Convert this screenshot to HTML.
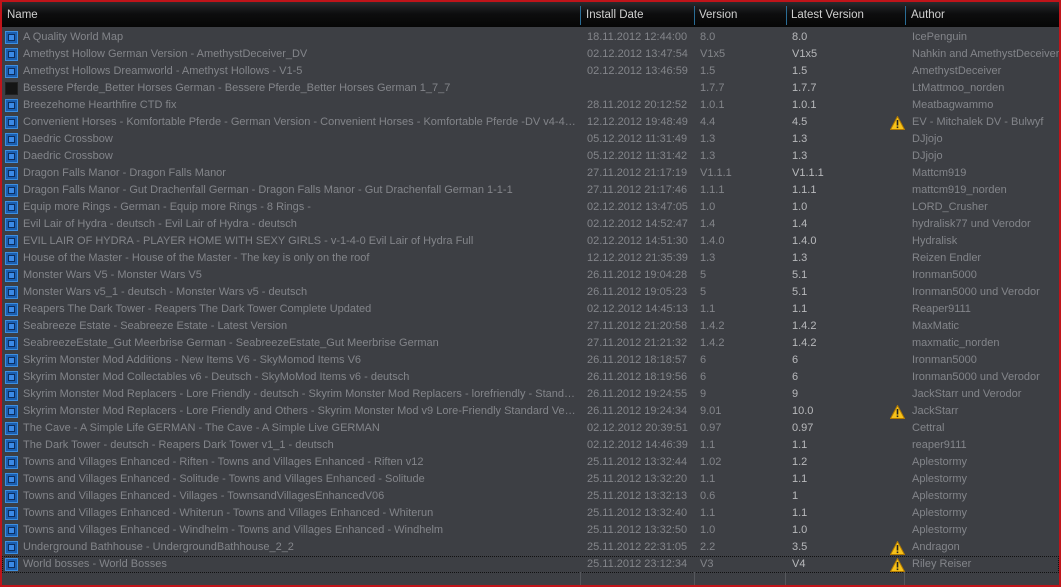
<!DOCTYPE html><html><head><style>
*{margin:0;padding:0;box-sizing:border-box}
body{width:1061px;height:587px;background:#c0141a;overflow:hidden;font-family:"Liberation Sans",sans-serif;font-size:11px}
#w{position:absolute;left:2px;top:2px;width:1057px;height:583px;background:#3d3f44;overflow:hidden}
#h{position:absolute;left:0;top:0;width:100%;height:25px;background:linear-gradient(#2a2b2e 0,#1a1b1d 6px,#0d0d0e 12px,#060606 25px);color:#d0d0d0;font-size:11.5px}
#h span{position:absolute;top:7px}
.sep{position:absolute;top:4px;width:1px;height:19px;background:#2a6d96}
.r{position:absolute;left:0;width:100%;height:17px;color:#83858a;white-space:nowrap}
.r span{position:absolute;top:2px}
.c0{left:21px;width:555px;overflow:hidden;text-overflow:ellipsis}
.c1{left:585px}.c2{left:698px}.c3{left:790px;color:#b8b9bc}.c4{left:910px}
.ic{position:absolute;left:3px;top:2px;width:13px;height:13px;background:#1b5fb0;border:1px solid #3d8ee0}
.ic:after{content:"";position:absolute;left:2px;top:2px;width:7px;height:7px;background:#0d2d5c}
.ic:before{content:"";position:absolute;left:3px;top:3px;width:5px;height:5px;background:#3b8ae6;z-index:1}
.ic.off{background:#151515;border-color:#222}.ic.off:after,.ic.off:before{display:none}
.wn{position:absolute;left:888px;top:1px}
.vl{position:absolute;top:570px;width:1px;height:13px;background:#55575c}
</style></head><body><div id="w">
<div id="h"><span style="left:5px">Name</span><div class="sep" style="left:578px"></div><span style="left:584px">Install Date</span><div class="sep" style="left:692px"></div><span style="left:697px">Version</span><div class="sep" style="left:784px"></div><span style="left:789px">Latest Version</span><div class="sep" style="left:903px"></div><span style="left:909px">Author</span></div>
<div id="rows"></div>
<div class="vl" style="left:578px"></div><div class="vl" style="left:692px"></div><div class="vl" style="left:783px"></div><div class="vl" style="left:902px"></div>
</div>
<script>
var d=[
["A Quality World Map","18.11.2012 12:44:00","8.0","8.0","IcePenguin"],
["Amethyst Hollow German Version - AmethystDeceiver_DV","02.12.2012 13:47:54","V1x5","V1x5","Nahkin and AmethystDeceiver"],
["Amethyst Hollows Dreamworld - Amethyst Hollows - V1-5","02.12.2012 13:46:59","1.5","1.5","AmethystDeceiver"],
["Bessere Pferde_Better Horses German - Bessere Pferde_Better Horses German 1_7_7","","1.7.7","1.7.7","LtMattmoo_norden",0,1],
["Breezehome Hearthfire CTD fix","28.11.2012 20:12:52","1.0.1","1.0.1","Meatbagwammo"],
["Convenient Horses - Komfortable Pferde - German Version - Convenient Horses - Komfortable Pferde -DV v4-4 mit Deutsch","12.12.2012 19:48:49","4.4","4.5","EV - Mitchalek DV - Bulwyf",1],
["Daedric Crossbow","05.12.2012 11:31:49","1.3","1.3","DJjojo"],
["Daedric Crossbow","05.12.2012 11:31:42","1.3","1.3","DJjojo"],
["Dragon Falls Manor - Dragon Falls Manor","27.11.2012 21:17:19","V1.1.1","V1.1.1","Mattcm919"],
["Dragon Falls Manor - Gut Drachenfall German - Dragon Falls Manor - Gut Drachenfall German 1-1-1","27.11.2012 21:17:46","1.1.1","1.1.1","mattcm919_norden"],
["Equip more Rings - German - Equip more Rings  - 8 Rings -","02.12.2012 13:47:05","1.0","1.0","LORD_Crusher"],
["Evil Lair of Hydra - deutsch - Evil Lair of Hydra - deutsch","02.12.2012 14:52:47","1.4","1.4","hydralisk77 und Verodor"],
["EVIL LAIR OF HYDRA - PLAYER HOME WITH SEXY GIRLS - v-1-4-0 Evil Lair of Hydra Full","02.12.2012 14:51:30","1.4.0","1.4.0","Hydralisk"],
["House of the Master - House of the Master - The key is only on the roof","12.12.2012 21:35:39","1.3","1.3","Reizen Endler"],
["Monster Wars V5 - Monster Wars V5","26.11.2012 19:04:28","5","5.1","Ironman5000"],
["Monster Wars v5_1 - deutsch - Monster Wars v5 - deutsch","26.11.2012 19:05:23","5","5.1","Ironman5000 und Verodor"],
["Reapers The Dark Tower - Reapers The Dark Tower Complete Updated","02.12.2012 14:45:13","1.1","1.1","Reaper9111"],
["Seabreeze Estate - Seabreeze Estate - Latest Version","27.11.2012 21:20:58","1.4.2","1.4.2","MaxMatic"],
["SeabreezeEstate_Gut Meerbrise German - SeabreezeEstate_Gut Meerbrise German","27.11.2012 21:21:32","1.4.2","1.4.2","maxmatic_norden"],
["Skyrim Monster Mod Additions - New Items V6 - SkyMomod Items V6","26.11.2012 18:18:57","6","6","Ironman5000"],
["Skyrim Monster Mod Collectables v6 - Deutsch - SkyMoMod Items v6 - deutsch","26.11.2012 18:19:56","6","6","Ironman5000 und Verodor"],
["Skyrim Monster Mod Replacers - Lore Friendly - deutsch - Skyrim Monster Mod Replacers - lorefriendly - Standard Version","26.11.2012 19:24:55","9","9","JackStarr und Verodor"],
["Skyrim Monster Mod Replacers - Lore Friendly and Others - Skyrim Monster Mod v9 Lore-Friendly Standard Version","26.11.2012 19:24:34","9.01","10.0","JackStarr",1],
["The Cave - A Simple Life GERMAN - The Cave - A Simple Live GERMAN","02.12.2012 20:39:51","0.97","0.97","Cettral"],
["The Dark Tower - deutsch - Reapers Dark Tower v1_1 - deutsch","02.12.2012 14:46:39","1.1","1.1","reaper9111"],
["Towns and Villages Enhanced - Riften - Towns and Villages Enhanced - Riften v12","25.11.2012 13:32:44","1.02","1.2","Aplestormy"],
["Towns and Villages Enhanced - Solitude - Towns and Villages Enhanced - Solitude","25.11.2012 13:32:20","1.1","1.1","Aplestormy"],
["Towns and Villages Enhanced - Villages - TownsandVillagesEnhancedV06","25.11.2012 13:32:13","0.6","1","Aplestormy"],
["Towns and Villages Enhanced - Whiterun - Towns and Villages Enhanced - Whiterun","25.11.2012 13:32:40","1.1","1.1","Aplestormy"],
["Towns and Villages Enhanced - Windhelm - Towns and Villages Enhanced - Windhelm","25.11.2012 13:32:50","1.0","1.0","Aplestormy"],
["Underground Bathhouse - UndergroundBathhouse_2_2","25.11.2012 22:31:05","2.2","3.5","Andragon",1],
["World bosses - World Bosses","25.11.2012 23:12:34","V3","V4","Riley Reiser",1]];
var w='<svg width="15" height="14" viewBox="0 0 15 14"><path d="M7.5 0.5L14.5 13.5H0.5Z" fill="#f7c21a" stroke="#b27a00"/><rect x="6.7" y="4" width="1.6" height="5.5" fill="#222"/><rect x="6.7" y="10.5" width="1.6" height="1.6" fill="#222"/></svg>';
var h='';d.forEach(function(r,i){var t=27+i*17;
h+='<div class="r" style="top:'+t+'px'+(i==31?';outline:1px dotted #111;outline-offset:-1px':'')+'"><div class="ic'+(r[6]?' off':'')+'"></div><span class="c0">'+r[0]+'</span><span class="c1">'+r[1]+'</span><span class="c2">'+r[2]+'</span><span class="c3">'+r[3]+'</span>'+(r[5]?'<span class="wn">'+w+'</span>':'')+'<span class="c4">'+r[4]+'</span></div>';});
document.getElementById('rows').innerHTML=h;
</script></body></html>
